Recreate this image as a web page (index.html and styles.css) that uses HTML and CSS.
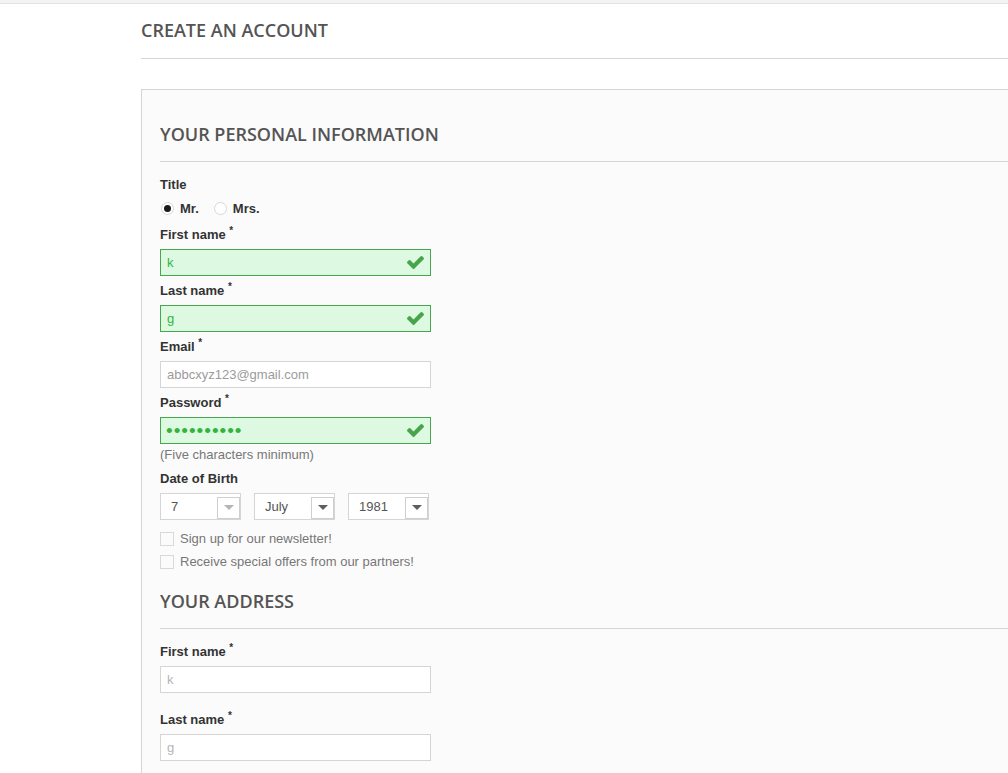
FILE: index.html
```html
<!DOCTYPE html>
<html>
<head>
<meta charset="utf-8">
<link rel="stylesheet" href="styles.css">
</head>
<body>
<div class="topbar"></div>
<main class="page">
  <h1 class="page-heading">Create an account</h1>
  <form class="account-box">
    <h3 class="section-heading">Your personal information</h3>
    <div class="field">
      <label class="lbl">Title</label>
      <div class="radios">
        <span class="radio checked"></span><span class="radio-text">Mr.</span>
        <span class="radio"></span><span class="radio-text">Mrs.</span>
      </div>
    </div>
    <div class="field">
      <label class="lbl">First name <sup>*</sup></label>
      <div class="input-wrap">
        <input class="inp ok" type="text" value="k">
        <svg class="check" viewBox="121 334 1550 1188" width="17" height="13"><path fill="#47a44b" d="M1671 566q0 40-28 68l-724 724-136 136q-28 28-68 28t-68-28l-136-136-362-362q-28-28-28-68t28-68l136-136q28-28 68-28t68 28l294 295 656-657q28-28 68-28t68 28l136 136q28 28 28 68z"/></svg>
      </div>
    </div>
    <div class="field">
      <label class="lbl">Last name <sup>*</sup></label>
      <div class="input-wrap">
        <input class="inp ok" type="text" value="g">
        <svg class="check" viewBox="121 334 1550 1188" width="17" height="13"><path fill="#47a44b" d="M1671 566q0 40-28 68l-724 724-136 136q-28 28-68 28t-68-28l-136-136-362-362q-28-28-28-68t28-68l136-136q28-28 68-28t68 28l294 295 656-657q28-28 68-28t68 28l136 136q28 28 28 68z"/></svg>
      </div>
    </div>
    <div class="field">
      <label class="lbl">Email <sup>*</sup></label>
      <div class="input-wrap">
        <input class="inp muted" type="text" value="abbcxyz123@gmail.com">
      </div>
    </div>
    <div class="field">
      <label class="lbl">Password <sup>*</sup></label>
      <div class="input-wrap">
        <input class="inp ok pwd" type="password" value="abcdefghij">
        <svg class="check" viewBox="121 334 1550 1188" width="17" height="13"><path fill="#47a44b" d="M1671 566q0 40-28 68l-724 724-136 136q-28 28-68 28t-68-28l-136-136-362-362q-28-28-28-68t28-68l136-136q28-28 68-28t68 28l294 295 656-657q28-28 68-28t68 28l136 136q28 28 28 68z"/></svg>
      </div>
      <p class="hint">(Five characters minimum)</p>
    </div>
    <div class="field dob">
      <label class="lbl">Date of Birth</label>
      <div class="selects">
        <div class="sel"><span>7</span><span class="arrow light"></span></div>
        <div class="sel"><span>July</span><span class="arrow"></span></div>
        <div class="sel"><span>1981</span><span class="arrow"></span></div>
      </div>
    </div>
    <div class="checks">
      <div class="chk-row"><span class="chk"></span><span>Sign up for our newsletter!</span></div>
      <div class="chk-row"><span class="chk"></span><span>Receive special offers from our partners!</span></div>
    </div>
    <h3 class="section-heading address">Your address</h3>
    <div class="field spaced">
      <label class="lbl">First name <sup>*</sup></label>
      <div class="input-wrap"><input class="inp faint" type="text" value="k"></div>
    </div>
    <div class="field spaced">
      <label class="lbl">Last name <sup>*</sup></label>
      <div class="input-wrap"><input class="inp faint" type="text" value="g"></div>
    </div>
  </form>
</main>
</body>
</html>
```
FILE: styles.css
```css
html, body {
  margin: 0;
  padding: 0;
  overflow: hidden;
  background: #fff;
}
body {
  font-family: "Liberation Sans", Arial, sans-serif;
  font-size: 13px;
  color: #333;
}
.topbar {
  height: 3px;
  background: #f3f3f3;
  border-bottom: 1px solid #e3e3e3;
}
.page {
  padding-left: 141px;
  width: 1200px;
}
.page-heading {
  margin: 15px 0 0;
  padding-bottom: 17px;
  font-family: "Open Sans", sans-serif;
  font-weight: 600;
  font-size: 18px;
  line-height: 22px;
  text-transform: uppercase;
  color: #555454;
  border-bottom: 1px solid #d6d4d4;
}
.account-box {
  margin-top: 30px;
  border: 1px solid #d6d4d4;
  background: #fbfbfb;
  padding: 33px 18px 40px;
}
.section-heading {
  margin: 0;
  padding-bottom: 16px;
  font-family: "Open Sans", sans-serif;
  font-weight: 600;
  font-size: 18px;
  line-height: 22px;
  text-transform: uppercase;
  color: #555454;
  border-bottom: 1px solid #d6d4d4;
}
.section-heading.address {
  margin-top: 17px;
}
.field {
  display: flex;
  flex-direction: column;
  margin-top: 13px;
}
.field + .field {
  margin-top: 5px;
}
.field.dob {
  margin-top: 5px;
}
.field.spaced + .field.spaced {
  margin-top: 17px;
}
.lbl {
  font-weight: bold;
  line-height: 18px;
  padding-top: 1px;
  color: #333;
}
.lbl sup {
  font-size: 10px;
  line-height: 0;
  vertical-align: 5px;
}
.radios {
  display: flex;
  align-items: center;
  height: 18px;
  margin: 5px 0 3px;
  font-weight: bold;
}
.radio {
  width: 11px;
  height: 11px;
  border: 1px solid #d8d8d8;
  border-radius: 50%;
  background: #fff;
  margin-left: 1px;
  margin-right: 6px;
  position: relative;
  box-sizing: content-box;
}
.radio.checked::after {
  content: "";
  position: absolute;
  left: 2px;
  top: 2px;
  width: 7px;
  height: 7px;
  border-radius: 50%;
  background: #1a1a1a;
}
.radio-text {
  margin-right: 14px;
}
.input-wrap {
  position: relative;
  width: 271px;
  margin-top: 5px;
}
.inp {
  box-sizing: border-box;
  display: block;
  width: 271px;
  height: 27px;
  margin: 0;
  padding: 0 6px;
  border: 1px solid #d6d4d4;
  background: #fff;
  font-family: "Liberation Sans", Arial, sans-serif;
  font-size: 13px;
  color: #9c9b9b;
  outline: none;
}
.inp.ok {
  border-color: #46a74e;
  background: #ddf9e1;
  color: #35b33f;
}
.inp.pwd {
  font-size: 19px;
  letter-spacing: 1px;
  padding-left: 5px;
}
.inp.faint {
  color: #b5b5b5;
}
.check {
  position: absolute;
  right: 7px;
  top: 7px;
}
.hint {
  margin: 2px 0 0;
  line-height: 18px;
  color: #777;
}
.selects {
  display: flex;
  gap: 13px;
  margin-top: 5px;
}
.sel {
  box-sizing: border-box;
  width: 81px;
  height: 27px;
  border: 1px solid #d6d4d4;
  background: #fff;
  display: flex;
  align-items: center;
  justify-content: space-between;
  padding-left: 10px;
  color: #555;
  position: relative;
}
.arrow {
  box-sizing: border-box;
  width: 23px;
  height: 22px;
  margin-top: 2px;
  border: 1px solid #cfcfcf;
  background: #fff;
  display: flex;
  align-items: center;
  justify-content: center;
}
.arrow::after {
  content: "";
  border-left: 5px solid transparent;
  border-right: 5px solid transparent;
  border-top: 5px solid #5e5e5e;
}
.arrow.light::after {
  border-top-color: #b5b5b5;
}
.checks {
  margin-top: 7px;
}
.chk-row {
  display: flex;
  align-items: center;
  height: 23px;
  color: #777;
}
.chk {
  box-sizing: border-box;
  width: 14px;
  height: 14px;
  border: 1px solid #d9d9d9;
  background: #fbfbfb;
  margin-right: 6px;
}
```
